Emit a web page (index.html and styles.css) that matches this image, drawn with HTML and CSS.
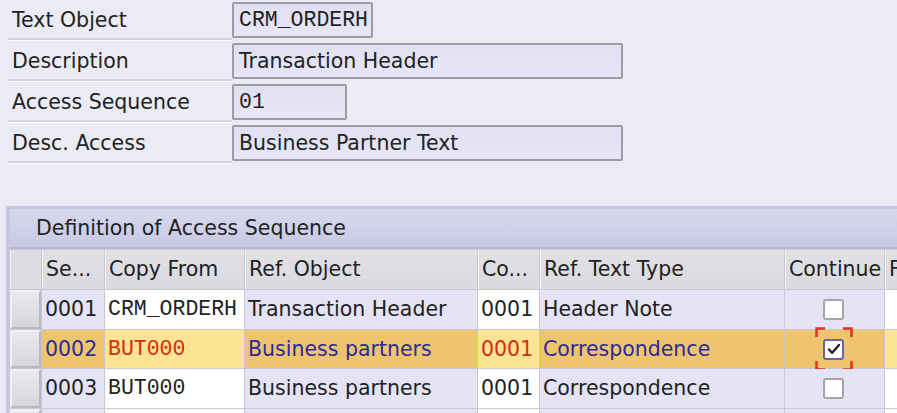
FILE: index.html
```html
<!DOCTYPE html>
<html>
<head>
<meta charset="utf-8">
<link rel="stylesheet" href="styles.css">
</head>
<body>
<div class="form">
  <div class="frow">
    <div class="flabel">Text Object</div>
    <div class="field mono w-short2">CRM_ORDERH</div>
  </div>
  <div class="frow">
    <div class="flabel">Description</div>
    <div class="field w-long">Transaction Header</div>
  </div>
  <div class="frow">
    <div class="flabel">Access Sequence</div>
    <div class="field mono w-short">01</div>
  </div>
  <div class="frow">
    <div class="flabel">Desc. Access</div>
    <div class="field w-long">Business Partner Text</div>
  </div>
</div>

<div class="panel">
  <div class="ptitle">Definition of Access Sequence</div>
  <div class="grid">
    <div class="hd sel"></div>
    <div class="hd">Se...</div>
    <div class="hd">Copy From</div>
    <div class="hd">Ref. Object</div>
    <div class="hd">Co...</div>
    <div class="hd">Ref. Text Type</div>
    <div class="hd">Continue</div>
    <div class="hd">F</div>

    <div class="c sel"></div>
    <div class="c ro">0001</div>
    <div class="c ed mono">CRM_ORDERH</div>
    <div class="c ro">Transaction Header</div>
    <div class="c ed">0001</div>
    <div class="c ro">Header Note</div>
    <div class="c ro cb"><span class="box"></span></div>
    <div class="c ed"></div>

    <div class="c sel"></div>
    <div class="c ro hl blue">0002</div>
    <div class="c ed hl red mono">BUT000</div>
    <div class="c ro hl blue">Business partners</div>
    <div class="c ed hl red">0001</div>
    <div class="c ro hl blue">Correspondence</div>
    <div class="c ro hl cb">
      <span class="box checked"><svg width="14" height="12" viewBox="0 0 14 12"><path d="M2 6.5 L5.2 9.8 L12 2" fill="none" stroke="#202030" stroke-width="2.4" stroke-linecap="round" stroke-linejoin="round"/></svg></span>
      <svg class="focus" width="38" height="44" viewBox="0 0 38 44"><path d="M1.5 10 V1.5 H10 M28 1.5 H36.5 V10 M36.5 34 V42.5 H28 M10 42.5 H1.5 V34" fill="none" stroke="#e2301e" stroke-width="2.5"/></svg>
    </div>
    <div class="c ed hl"></div>

    <div class="c sel"></div>
    <div class="c ro">0003</div>
    <div class="c ed mono">BUT000</div>
    <div class="c ro">Business partners</div>
    <div class="c ed">0001</div>
    <div class="c ro">Correspondence</div>
    <div class="c ro cb"><span class="box"></span></div>
    <div class="c ed"></div>

    <div class="c sel"></div>
    <div class="c ro"></div>
    <div class="c ed"></div>
    <div class="c ro"></div>
    <div class="c ed"></div>
    <div class="c ro"></div>
    <div class="c ro"></div>
    <div class="c ed"></div>
  </div>
</div>
</body>
</html>
```

FILE: styles.css
```css
html, body {
  margin: 0;
  padding: 0;
}
body {
  width: 897px;
  height: 413px;
  overflow: hidden;
  background: #ebebf6;
  font-family: "DejaVu Sans", Verdana, sans-serif;
  font-size: 20.5px;
  color: #222;
}
.form {
  padding-left: 8px;
  display: flex;
  flex-direction: column;
}
.frow {
  display: flex;
  height: 41px;
}
.flabel {
  width: 224px;
  padding-left: 4px;
  padding-top: 2px;
  border-bottom: 2px solid #d4d4e0;
  box-shadow: 0 1px 0 #fbfbff;
  height: 40px;
  line-height: 36px;
  box-sizing: border-box;
}
.field {
  margin-top: 2px;
  height: 36px;
  box-sizing: border-box;
  border: 2px solid #9c9ca4;
  border-radius: 2px;
  background: linear-gradient(#e0e0f2, #e6e6f6);
  padding-left: 5px;
  line-height: 33px;
  white-space: nowrap;
}
.w-long { width: 391px; }
.w-short { width: 115px; }
.w-short2 { width: 141px; }
.mono {
  font-family: "Liberation Mono", "Courier New", monospace;
  font-size: 21.5px;
}
.panel {
  margin: 42px 0 0 6px;
  border-left: 3px solid #c6c6de;
  border-top: 3px solid #c6c6de;
  background: #c6c6de;
  padding: 0 0 0 1px;
  height: 300px;
  overflow: hidden;
}
.ptitle {
  height: 38px;
  line-height: 38px;
  padding-left: 26px;
  background: linear-gradient(#d8d8ee, #c8c8e4);
  border-bottom: 2px solid #b8b8d4;
}
.grid {
  display: grid;
  grid-template-columns: 31px 62px 139px 232px 61px 244px 99px 60px;
  grid-template-rows: 39px 39px 38px 39px 40px;
  width: 975px;
  background: #c8c8d2;
  gap: 1px;
  padding-top: 1px;
}
.hd {
  background: linear-gradient(#e2e2e6, #d8d8de);
  padding-left: 3px;
  line-height: 39px;
  white-space: nowrap;
  overflow: hidden;
  border-left: 1px solid #f4f4f8;
}
.hd.sel {
  background: #dcdce2;
}
.c {
  padding-left: 3px;
  line-height: 39px;
  white-space: nowrap;
  overflow: hidden;
}
.c.sel {
  background: linear-gradient(#eaeaee, #d4d4da);
  border: 2px solid #f0f0f4;
  border-right-color: #b8b8c0;
  border-bottom-color: #b8b8c0;
  padding: 0;
}
.ro { background: #e4e4f6; }
.ed { background: #ffffff; }
.ro.hl { background: #eec46c; }
.ed.hl { background: #fde394; }
.blue { color: #2c2a9c; }
.red { color: #d42a10; }
.cb {
  position: relative;
  display: flex;
  align-items: center;
  justify-content: center;
  padding: 0;
  overflow: visible;
  z-index: 1;
}
.box {
  width: 21px;
  height: 21px;
  box-sizing: border-box;
  border: 2px solid #a4a4aa;
  border-radius: 3px;
  background: #fff;
  display: flex;
  align-items: center;
  justify-content: center;
  margin-left: -2px;
}
.box.checked {
  border-color: #6a64a6;
}
.focus {
  position: absolute;
  left: 30px;
  top: -3px;
}
```
